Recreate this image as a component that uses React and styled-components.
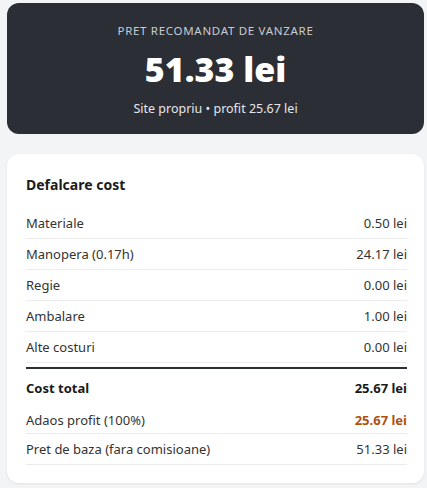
import React from 'react';
import styled, { createGlobalStyle } from 'styled-components';

const GlobalStyle = createGlobalStyle`
  body {
    margin: 0;
    background: #f3f4f6;
    font-family: "Segoe UI", "Noto Sans", "Open Sans", sans-serif;
    color: #222;
  }
`;

const Page = styled.div`
  display: flex;
  flex-direction: column;
  gap: 20px;
  padding: 3px 3px 5px 7px;
`;

const PriceCard = styled.div`
  background: #2b2e35;
  border-radius: 12px;
  height: 131px;
  box-sizing: border-box;
  padding-top: 20px;
  display: flex;
  flex-direction: column;
  align-items: center;
  color: #fff;
`;

const PriceLabel = styled.div`
  font-size: 11.5px;
  line-height: 16px;
  letter-spacing: 0.7px;
  color: #c9cbd0;
`;

const PriceValue = styled.div`
  font-size: 34px;
  line-height: 44px;
  font-weight: 900;
  margin-top: 8px;
`;

const PriceSub = styled.div`
  font-size: 12.5px;
  line-height: 18px;
  color: #e6e7ea;
  margin-top: 9px;
`;

const Card = styled.div`
  background: #fff;
  border-radius: 12px;
  box-shadow: 0 1px 3px rgba(0, 0, 0, 0.08);
  padding: 21px 17px 18px 19px;
  height: 329px;
  box-sizing: border-box;
`;

const CardTitle = styled.div`
  font-size: 14px;
  font-weight: 700;
  line-height: 20px;
  color: #1c1c1c;
  margin-bottom: 13px;
`;

const Row = styled.div`
  display: flex;
  justify-content: space-between;
  align-items: center;
  height: ${p => p.$h || 30}px;
  font-size: 13px;
  color: #333;
  border-bottom: ${p => (p.$plain ? 'none' : '1px solid #ececec')};
  font-weight: ${p => (p.$bold ? 700 : 400)};
  ${p => p.$bold && 'color: #1a1a1a;'}
`;

const Value = styled.span`
  color: ${p => p.$color || 'inherit'};
  font-weight: ${p => (p.$bold ? 700 : 'inherit')};
`;

const TotalBlock = styled.div`
  margin-top: 4px;
  border-top: 2px solid #2b2e35;
`;

const items = [
  ['Materiale', '0.50 lei'],
  ['Manopera (0.17h)', '24.17 lei'],
  ['Regie', '0.00 lei'],
  ['Ambalare', '1.00 lei'],
  ['Alte costuri', '0.00 lei'],
];

export default function App() {
  return (
    <>
      <GlobalStyle />
      <Page>
        <PriceCard>
          <PriceLabel>PRET RECOMANDAT DE VANZARE</PriceLabel>
          <PriceValue>51.33 lei</PriceValue>
          <PriceSub>Site propriu • profit 25.67 lei</PriceSub>
        </PriceCard>
        <Card>
          <CardTitle>Defalcare cost</CardTitle>
          {items.map(([label, value]) => (
            <Row key={label}>
              <span>{label}</span>
              <span>{value}</span>
            </Row>
          ))}
          <TotalBlock>
            <Row $plain $bold $h={38}>
              <span>Cost total</span>
              <span>25.67 lei</span>
            </Row>
            <Row $h={26}>
              <span>Adaos profit (100%)</span>
              <Value $bold $color="#b0500f">25.67 lei</Value>
            </Row>
            <Row>
              <span>Pret de baza (fara comisioane)</span>
              <span>51.33 lei</span>
            </Row>
          </TotalBlock>
        </Card>
      </Page>
    </>
  );
}
